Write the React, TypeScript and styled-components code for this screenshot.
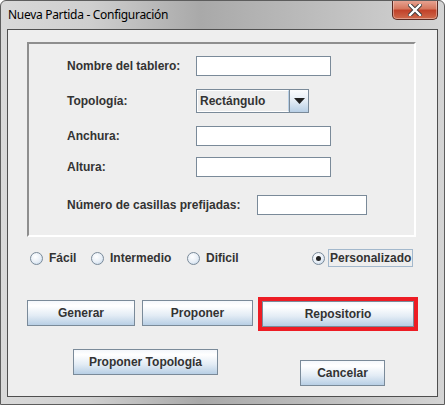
import styled, { createGlobalStyle } from 'styled-components';

const GlobalStyle = createGlobalStyle`
  html, body {
    margin: 0;
    padding: 0;
    background: #ffffff;
  }
  * {
    box-sizing: border-box;
  }
`;

const Frame = styled.div`
  width: 445px;
  height: 405px;
  display: flex;
  flex-direction: column;
  border: 1px solid #5d5d5d;
  border-radius: 6px 6px 0 0;
  background: linear-gradient(90deg, #d9d9d9 0%, #cfcfcf 20%, #a9a9a9 45%, #b8b8b8 65%, #d4d4d4 100%);
  font-family: 'Liberation Sans', Arial, sans-serif;
  overflow: hidden;
`;

const TitleBar = styled.div`
  height: 28px;
  display: flex;
  align-items: flex-start;
  justify-content: space-between;
  padding-left: 7px;
`;

const Title = styled.span`
  font-family: 'Noto Sans', 'Open Sans', sans-serif;
  font-size: 12px;
  line-height: 28px;
  color: #000000;
  letter-spacing: -0.3px;
`;

const CloseButton = styled.div`
  width: 46px;
  height: 20px;
  margin-right: 6px;
  margin-top: -1px;
  border: 1px solid #5b2a22;
  border-top: none;
  border-radius: 0 0 5px 5px;
  background: linear-gradient(180deg, #e9a797 0%, #d6785f 45%, #c1422a 55%, #cf6a4c 100%);
  display: flex;
  align-items: center;
  justify-content: center;
  box-shadow: inset 0 0 0 1px rgba(255, 255, 255, 0.35);
`;

const Client = styled.div`
  margin: 0 6px 7px 6px;
  flex: 1;
  border: 1px solid #4f4f4f;
  background: #eeeeee;
  display: flex;
  flex-direction: column;
  color: #333333;
  font-size: 12px;
  font-weight: bold;
`;

const Panel = styled.div`
  margin: 12px 0 0 19px;
  width: 389px;
  height: 195px;
  border-style: solid;
  border-width: 2px;
  border-color: #8e8e8e #ffffff #ffffff #8e8e8e;
  padding: 12px 0 0 38px;
  display: flex;
  flex-direction: column;
`;

const FormRow = styled.div<{ $top: number; $label: number }>`
  display: flex;
  align-items: center;
  margin-top: ${(p) => p.$top}px;

  & > label {
    width: ${(p) => p.$label}px;
    flex-shrink: 0;
  }
`;

const TextField = styled.div<{ $w: number }>`
  width: ${(p) => p.$w}px;
  height: 20px;
  background: #ffffff;
  border: 1px solid #7a8a99;
  box-shadow: inset 1px 1px 0 #ffffff;
`;

const Combo = styled.div`
  width: 113px;
  height: 24px;
  display: flex;
  border: 1px solid #7a8a99;
`;

const ComboText = styled.div`
  flex: 1;
  display: flex;
  align-items: center;
  padding-left: 2px;
  background: #eeeeee;
  border: 1px solid #ffffff;
  border-right: 1px solid #b8cfe5;
  color: #333333;
`;

const ComboArrow = styled.div`
  width: 19px;
  display: flex;
  align-items: center;
  justify-content: center;
  border-left: 1px solid #7a8a99;
  background: linear-gradient(180deg, #fbfcfe 0%, #e3ecf5 50%, #b8cfe5 100%);
`;

const RadioRow = styled.div`
  display: flex;
  align-items: center;
  margin: 12px 0 0 22px;
  height: 18px;
`;

const RadioItem = styled.div<{ $w?: number }>`
  display: flex;
  align-items: center;
  gap: 2px;
  width: ${(p) => (p.$w ? `${p.$w}px` : 'auto')};
`;

const RadioCircle = styled.span<{ $checked?: boolean }>`
  width: 13px;
  height: 13px;
  border-radius: 50%;
  border: 1px solid #7a8a99;
  background: radial-gradient(circle at 40% 35%, #ffffff 0%, #e7eef6 55%, #b8cfe5 100%);
  display: flex;
  align-items: center;
  justify-content: center;

  &::after {
    content: '';
    display: ${(p) => (p.$checked ? 'block' : 'none')};
    width: 5px;
    height: 5px;
    border-radius: 50%;
    background: #222222;
  }
`;

const RadioLabel = styled.span<{ $focus?: boolean }>`
  padding: 1px 1px;
  margin-left: ${(p) => (p.$focus ? '1px' : '2px')};
  border: 1px solid ${(p) => (p.$focus ? '#a3b8cc' : 'transparent')};
  line-height: 14px;
`;

const ButtonRow = styled.div<{ $top: number; $left: number }>`
  display: flex;
  align-items: flex-start;
  margin: ${(p) => p.$top}px 0 0 ${(p) => p.$left}px;
`;

const Button = styled.div<{ $w: number; $ml?: number; $mt?: number }>`
  width: ${(p) => p.$w}px;
  height: 26px;
  margin-left: ${(p) => p.$ml ?? 0}px;
  margin-top: ${(p) => p.$mt ?? 0}px;
  border: 1px solid #7a8a99;
  background: linear-gradient(180deg, #f4f7fb 0%, #ffffff 20%, #e3ecf5 60%, #b8cfe5 100%);
  display: flex;
  align-items: center;
  justify-content: center;
  color: #333333;
  font-weight: bold;
  font-size: 12px;
`;

const Highlight = styled.div`
  margin-left: 5px;
  margin-top: -3px;
  border: 4px solid #ed1c24;
  padding: 0;
`;

export default function App() {
  return (
    <>
      <GlobalStyle />
      <Frame>
        <TitleBar>
          <Title>Nueva Partida - Configuración</Title>
          <CloseButton>
            <svg width="14" height="12" viewBox="0 0 14 12">
              <path
                d="M2 1 L12 11 M12 1 L2 11"
                stroke="#3a3a3a"
                strokeWidth="4.2"
                strokeLinecap="square"
              />
              <path
                d="M2 1 L12 11 M12 1 L2 11"
                stroke="#ffffff"
                strokeWidth="2.4"
                strokeLinecap="square"
              />
            </svg>
          </CloseButton>
        </TitleBar>
        <Client>
          <Panel>
            <FormRow $top={0} $label={129}>
              <label>Nombre del tablero:</label>
              <TextField $w={135} />
            </FormRow>
            <FormRow $top={13} $label={129}>
              <label>Topología:</label>
              <Combo>
                <ComboText>Rectángulo</ComboText>
                <ComboArrow>
                  <svg width="11" height="6" viewBox="0 0 11 6">
                    <path d="M0 0 H11 L5.5 6 Z" fill="#222222" />
                  </svg>
                </ComboArrow>
              </Combo>
            </FormRow>
            <FormRow $top={13} $label={129}>
              <label>Anchura:</label>
              <TextField $w={135} />
            </FormRow>
            <FormRow $top={11} $label={129}>
              <label>Altura:</label>
              <TextField $w={135} />
            </FormRow>
            <FormRow $top={18} $label={190}>
              <label>Número de casillas prefijadas:</label>
              <TextField $w={110} />
            </FormRow>
          </Panel>

          <RadioRow>
            <RadioItem $w={61}>
              <RadioCircle />
              <RadioLabel>Fácil</RadioLabel>
            </RadioItem>
            <RadioItem $w={96}>
              <RadioCircle />
              <RadioLabel>Intermedio</RadioLabel>
            </RadioItem>
            <RadioItem $w={125}>
              <RadioCircle />
              <RadioLabel>Dificil</RadioLabel>
            </RadioItem>
            <RadioItem>
              <RadioCircle $checked />
              <RadioLabel $focus>Personalizado</RadioLabel>
            </RadioItem>
          </RadioRow>

          <ButtonRow $top={33} $left={19}>
            <Button $w={108}>Generar</Button>
            <Button $w={111} $ml={7}>
              Proponer
            </Button>
            <Highlight>
              <Button $w={152}>Repositorio</Button>
            </Highlight>
          </ButtonRow>
          <ButtonRow $top={18} $left={65}>
            <Button $w={145}>Proponer Topología</Button>
            <Button $w={85} $ml={82} $mt={11}>
              Cancelar
            </Button>
          </ButtonRow>
        </Client>
      </Frame>
    </>
  );
}
